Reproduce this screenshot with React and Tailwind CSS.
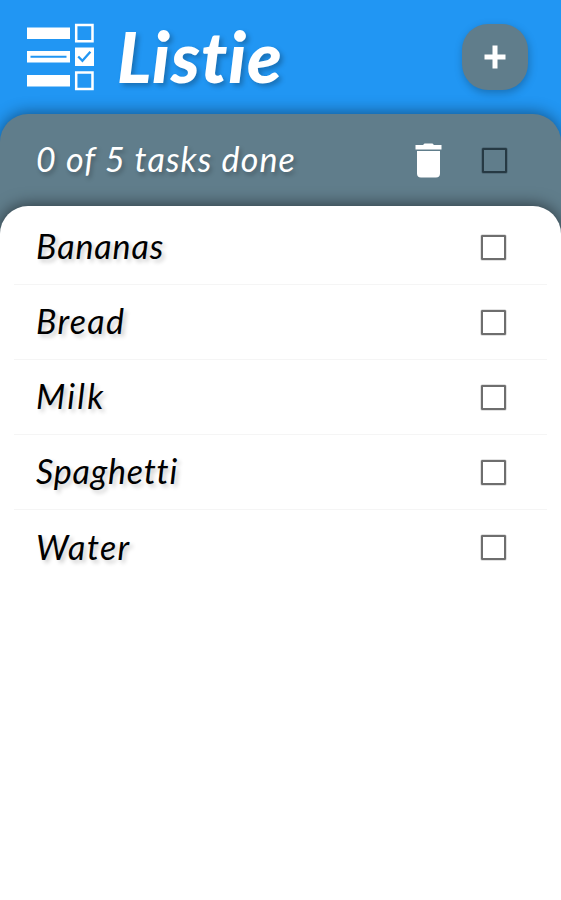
import React, { useState } from 'react';

const initialTasks = [
  { name: 'Bananas', tracking: 'tracking-[0.9px]' },
  { name: 'Bread', tracking: 'tracking-[1.3px]' },
  { name: 'Milk', tracking: 'tracking-[2.2px]' },
  { name: 'Spaghetti', tracking: 'tracking-[0.8px]' },
  { name: 'Water', tracking: 'tracking-[1.4px]' },
];

function Logo() {
  return (
    <svg width="68" height="68" viewBox="0 0 68 68" fill="none" aria-hidden="true">
      <path fill="#fff" d="M0 4.5h43v11.5H0zM0 28h43v11.5H0zM0 52h43v11.5H0z" />
      <path stroke="#2196f3" strokeWidth="2" d="M3.5 33.8h36" />
      <path stroke="#fff" strokeWidth="2.5" d="M49.2 1.9h16.3v16.3H49.2zM49.2 49.6h16.3v16.3H49.2z" />
      <path fill="#fff" d="M48 24.5h19v18.5H48z" />
      <path stroke="#2196f3" strokeWidth="2.3" d="M51.2 33.5l4.2 4.2 8-9" />
    </svg>
  );
}

function Checkbox({ checked, onChange, label, dark }) {
  return (
    <button
      onClick={onChange}
      role="checkbox"
      aria-checked={checked}
      aria-label={label}
      className={`w-[25px] h-[25px] rounded-[1px] border-2 flex items-center justify-center ${dark ? 'border-[#263943] ring-[0.5px] ring-[#263943]/50' : 'border-[#6e6e6e] ring-[0.5px] ring-[#6e6e6e]/40'}`}
    >
      {checked && <span className="w-3 h-3 bg-[#2196f3]" />}
    </button>
  );
}

export default function App() {
  const [done, setDone] = useState([]);
  const allDone = done.length === initialTasks.length;

  const toggle = (name) => setDone(done.includes(name) ? done.filter((n) => n !== name) : [...done, name]);
  const toggleAll = () => setDone(allDone ? [] : initialTasks.map((t) => t.name));

  return (
    <div className="w-full h-screen bg-[#2196f3] flex flex-col overflow-hidden font-[Lato,sans-serif] italic">
      <header className="h-[114px] shrink-0 flex items-center pl-[27px] pr-[33px]">
        <Logo />
        <h1 className="ml-[22px] pb-1 text-[71px] leading-none font-black text-white tracking-[1px] [text-shadow:3px_3px_5px_rgba(0,0,0,0.25)]">Listie</h1>
        <button aria-label="Add" className="ml-auto w-[66px] h-[66px] rounded-[26px] bg-[#607d8b] flex items-center justify-center shadow-[1px_3px_8px_rgba(0,0,0,0.25)]">
          <svg width="22" height="24" viewBox="0 0 22 24" stroke="#fff" strokeWidth="5" aria-hidden="true">
            <path d="M11 .5v23M.5 12h21" />
          </svg>
        </button>
      </header>

      <main className="flex-1 flex flex-col bg-[#607d8b] rounded-t-[28px] shadow-[0_-1px_16px_rgba(0,0,0,0.45)]">
        <div className="h-[92px] shrink-0 flex items-center pl-[36px] pr-[54px]">
          <h2 className="pb-0.5 text-[34px] leading-none text-white tracking-[1.1px] [text-shadow:2px_3px_4px_rgba(0,0,0,0.25)]">
            {done.length} of {initialTasks.length} tasks done
          </h2>
          <button aria-label="Delete" className="ml-auto mr-[40px]">
            <svg width="27" height="35" viewBox="0 0 27 35" fill="#fff" aria-hidden="true">
              <path d="M.5 2h7.5L9.5.5h8L19 2h7.5v4.5H.5zM2 8h23v22.5a4 4 0 0 1-4 4H6a4 4 0 0 1-4-4z" />
            </svg>
          </button>
          <Checkbox dark checked={allDone} onChange={toggleAll} label="All tasks" />
        </div>

        <ul className="flex-1 bg-white rounded-t-[28px] pt-1 px-[14px] shadow-[0_-1px_16px_rgba(0,0,0,0.55)]">
          {initialTasks.map((t) => (
            <li key={t.name} className="h-[75px] flex items-center justify-between pl-[22px] pr-[41px] border-b border-[#f5f5f5] last:border-b-0">
              <span className={`pb-0.5 text-[34px] leading-none text-black [text-shadow:3px_3px_4px_rgba(0,0,0,0.2)] ${t.tracking}`}>{t.name}</span>
              <Checkbox checked={done.includes(t.name)} onChange={() => toggle(t.name)} label={t.name} />
            </li>
          ))}
        </ul>
      </main>
    </div>
  );
}
